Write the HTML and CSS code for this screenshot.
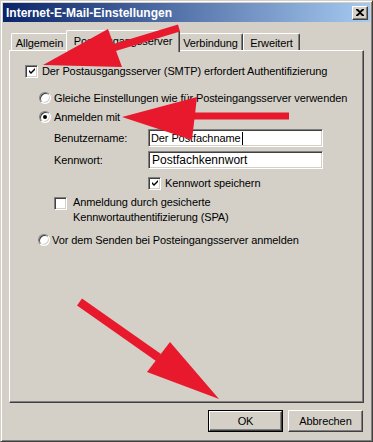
FILE: index.html
```html
<!DOCTYPE html>
<html lang="de">
<head>
<meta charset="utf-8">
<title>Internet-E-Mail-Einstellungen</title>
<link rel="stylesheet" href="styles.css">
</head>
<body>
<div class="window">
  <div class="titlebar">
    <span class="title">Internet-E-Mail-Einstellungen</span>
    <span class="close">
      <svg width="8" height="7" viewBox="0 0 8 7"><path d="M0 0h2l2 2 2-2h2v1L5 3.5 8 6v1H6L4 5 2 7H0V6l3-2.5L0 1z" fill="#000"/></svg>
    </span>
  </div>
  <div class="content">
    <div class="tabs">
      <div class="tab tab-general">Allgemein</div>
      <div class="tab tab-active">Postausgangsserver</div>
      <div class="tab tab-conn">Verbindung</div>
      <div class="tab tab-adv">Erweitert</div>
    </div>
    <div class="panel">
      <div class="row row-first">
        <span class="chk"><svg width="7" height="7" viewBox="0 0 7 7"><path d="M6 0v2L2 6 0 4V2l2 2z" fill="#000"/></svg></span>
        <span class="txt">Der Postausgangsserver (SMTP) erfordert Authentifizierung</span>
      </div>
      <div class="indent">
        <div class="row row-r1">
          <span class="radio"></span>
          <span class="rtxt">Gleiche Einstellungen wie für Posteingangsserver verwenden</span>
        </div>
        <div class="row row-r2">
          <span class="radio"><span class="dot"></span></span>
          <span class="rtxt">Anmelden mit</span>
        </div>
        <div class="field field-user">
          <span class="lbl">Benutzername:</span>
          <span class="input">Der Postfachname<span class="caret"></span></span>
        </div>
        <div class="field field-pass">
          <span class="lbl">Kennwort:</span>
          <span class="input input-big">Postfachkennwort</span>
        </div>
        <div class="row row-save">
          <span class="chk"><svg width="7" height="7" viewBox="0 0 7 7"><path d="M6 0v2L2 6 0 4V2l2 2z" fill="#000"/></svg></span>
          <span class="stxt">Kennwort speichern</span>
        </div>
        <div class="spa">
          <span class="chk chk-empty"></span>
          <span class="spatxt">Anmeldung durch gesicherte<br>Kennwortauthentifizierung (SPA)</span>
        </div>
        <div class="row row-r3">
          <span class="radio"></span>
          <span class="rtxt rtxt3">Vor dem Senden bei Posteingangsserver anmelden</span>
        </div>
      </div>
    </div>
    <div class="buttons">
      <div class="btn btn-default"><span class="btn-in">OK</span></div>
      <div class="btn"><span class="btn-in">Abbrechen</span></div>
    </div>
  </div>
</div>
<svg class="arrows" width="373" height="442" viewBox="0 0 373 442">
  <g fill="#e8192c" stroke="none">
    <path d="M178 24.5 L180 31.5 L114 51.5 L112 44.5 Z"/>
    <polygon points="43,65 108,29 122,67"/>
    <rect x="188" y="112.5" width="101" height="7"/>
    <polygon points="122,117 197,97 192,140"/>
    <path d="M82 298.5 L77 305.5 L156 361 L161 354 Z"/>
    <polygon points="219,399 170,342 147,372"/>
  </g>
</svg>
</body>
</html>
```
FILE: styles.css
```css
html, body {
  margin: 0;
  padding: 0;
}
body {
  width: 373px;
  height: 442px;
  overflow: hidden;
  background: #d4d0c8;
  font-family: "Liberation Sans", Arial, sans-serif;
  font-size: 11px;
  letter-spacing: -0.1px;
  color: #000;
  position: relative;
}
.window {
  box-sizing: border-box;
  width: 373px;
  height: 442px;
  border: 1px solid;
  border-color: #d4d0c8 #404040 #404040 #d4d0c8;
  box-shadow: inset 1px 1px #fff, inset -1px -1px #808080;
  padding: 2px;
  background: #d4d0c8;
}
.titlebar {
  height: 19px;
  background: linear-gradient(to right, #0a246a, #a6caf0);
  display: flex;
  align-items: center;
  justify-content: space-between;
  padding: 0 2px 0 3px;
}
.title {
  color: #fff;
  font-weight: bold;
  font-size: 12px;
  letter-spacing: 0;
}
.close {
  box-sizing: border-box;
  width: 16px;
  height: 14px;
  background: #d4d0c8;
  border: 1px solid;
  border-color: #fff #404040 #404040 #fff;
  box-shadow: inset -1px -1px #808080;
  display: flex;
  align-items: center;
  justify-content: center;
  padding-right: 1px;
}
.close svg { display: block; }
.content {
  padding: 8px 6px 0 6px;
}
.tabs {
  display: flex;
  align-items: flex-end;
  height: 20px;
  padding-left: 2px;
}
.tab {
  box-sizing: border-box;
  height: 17px;
  border: 1px solid;
  border-bottom: none;
  border-color: #fff #404040 #404040 #fff;
  border-radius: 2px 2px 0 0;
  box-shadow: inset -1px 0 #808080;
  display: flex;
  align-items: center;
  justify-content: center;
  padding-top: 1px;
  background: #d4d0c8;
  white-space: nowrap;
}
.tab-general { width: 57px; }
.tab-active {
  width: 114px;
  height: 22px;
  margin: 0 -2px -2px -2px;
  padding-bottom: 3px;
  position: relative;
  z-index: 1;
}
.tab-conn { width: 65px; }
.tab-adv { width: 57px; }
.panel {
  box-sizing: border-box;
  height: 353px;
  border: 1px solid;
  border-color: #fff #404040 #404040 #fff;
  box-shadow: inset -1px -1px #808080;
  padding: 13px 0 0 15px;
}
.row {
  display: flex;
  align-items: center;
  height: 14px;
  white-space: nowrap;
}
.chk {
  box-sizing: border-box;
  width: 13px;
  height: 13px;
  flex: none;
  background: #fff;
  border: 1px solid;
  border-color: #808080 #fff #fff #808080;
  box-shadow: inset 1px 1px #404040, inset -1px -1px #d4d0c8;
  display: flex;
  align-items: center;
  justify-content: center;
}
.chk svg { display: block; margin-left: 1px; margin-top: 1px; }
.txt { margin-left: 4px; }
.indent { margin-left: 14px; }
.row-r1 { margin-top: 13px; }
.row-r2 { margin-top: 5px; }
.radio {
  box-sizing: border-box;
  width: 12px;
  height: 12px;
  flex: none;
  border-radius: 50%;
  background: #fff;
  border: 1px solid;
  border-color: #808080 #fff #fff #808080;
  box-shadow: inset 1px 1px #404040, inset -1px -1px #d4d0c8;
  display: flex;
  align-items: center;
  justify-content: center;
}
.dot {
  width: 4px;
  height: 4px;
  border-radius: 50%;
  background: #000;
}
.rtxt { margin-left: 3px; }
.rtxt3 { margin-left: 2px; }
.field {
  display: flex;
  align-items: center;
  margin-left: 15px;
  height: 18px;
}
.field-user { margin-top: 5px; }
.field-pass { margin-top: 4px; }
.lbl { width: 94px; flex: none; }
.input {
  box-sizing: border-box;
  width: 175px;
  height: 18px;
  background: #fff;
  border: 1px solid;
  border-color: #808080 #fff #fff #808080;
  box-shadow: inset 1px 1px #404040, inset -1px -1px #d4d0c8;
  display: flex;
  align-items: center;
  padding-left: 2px;
  white-space: nowrap;
}
.input-big {
  font-size: 12px;
  letter-spacing: 0;
  padding-left: 3px;
}
.caret {
  display: inline-block;
  width: 1px;
  height: 13px;
  background: #000;
  margin-left: 1px;
}
.row-save {
  margin-top: 7px;
  margin-left: 109px;
}
.stxt { margin-left: 4px; }
.spa {
  display: flex;
  align-items: flex-start;
  margin-top: 5px;
  margin-left: 15px;
}
.spa .chk { margin-top: 2px; }
.spatxt {
  margin-left: 6px;
  line-height: 15px;
}
.row-r3 {
  margin-top: 8px;
  margin-left: -1px;
}
.buttons {
  display: flex;
  justify-content: flex-end;
  gap: 5px;
  margin-top: 7px;
  padding-right: 1px;
}
.btn {
  box-sizing: border-box;
  width: 75px;
  height: 22px;
  border: 1px solid;
  border-color: #fff #404040 #404040 #fff;
  box-shadow: inset -1px -1px #808080;
  display: flex;
}
.btn-in {
  flex: 1;
  display: flex;
  align-items: center;
  justify-content: center;
}
.btn-default {
  border: 1px solid #000;
  box-shadow: none;
}
.btn-default .btn-in {
  border: 1px solid;
  border-color: #fff #404040 #404040 #fff;
  box-shadow: inset -1px -1px #808080;
}
.arrows {
  position: absolute;
  top: 0;
  left: 0;
  z-index: 2;
  pointer-events: none;
}
```
